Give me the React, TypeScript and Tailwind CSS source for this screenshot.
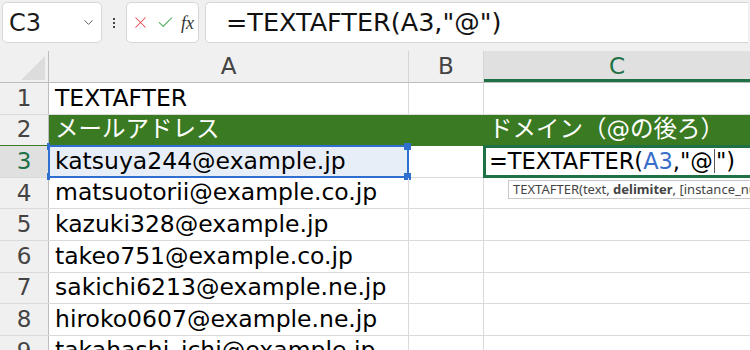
import { X, Check, ChevronDown } from 'lucide-react'

const font = { fontFamily: '"DejaVu Sans", "Noto Sans CJK JP", sans-serif' }

type Row = { n: number; a: string; c?: string; kind?: 'title' | 'header' | 'active' }

const rows: Row[] = [
  { n: 1, a: 'TEXTAFTER', kind: 'title' },
  { n: 2, a: 'メールアドレス', c: 'ドメイン（@の後ろ）', kind: 'header' },
  { n: 3, a: 'katsuya244@example.jp', kind: 'active' },
  { n: 4, a: 'matsuotorii@example.co.jp' },
  { n: 5, a: 'kazuki328@example.jp' },
  { n: 6, a: 'takeo751@example.co.jp' },
  { n: 7, a: 'sakichi6213@example.ne.jp' },
  { n: 8, a: 'hiroko0607@example.ne.jp' },
  { n: 9, a: 'takahashi_ichi@example.jp' },
]

function FormulaBar() {
  return (
    <div className="flex h-[51px] items-start gap-[6px] bg-[#f0f0f0] px-[2px] pt-[2px]">
      <div className="flex h-[41px] w-[100px] items-center justify-between rounded-[5px] border border-[#d6d6d6] bg-white pl-[6px] pr-[5px]">
        <span className="text-[24px] leading-none text-[#1a1a1a]">C3</span>
        <ChevronDown size={15} strokeWidth={1.5} className="text-[#555]" />
      </div>
      <div className="flex h-[41px] w-[12px] flex-col items-center justify-center gap-[2px]">
        <span className="h-[2px] w-[2px] bg-[#444]" />
        <span className="h-[2px] w-[2px] bg-[#444]" />
        <span className="h-[2px] w-[2px] bg-[#444]" />
      </div>
      <div className="flex h-[41px] w-[73px] items-center gap-[6px] rounded-[5px] border border-[#d6d6d6] bg-white pl-[4px]">
        <X size={19} strokeWidth={1.3} className="text-[#e5484d]" />
        <Check size={19} strokeWidth={1.3} className="text-[#3aa64a]" />
        <span className="text-[18px] italic leading-none text-[#333]" style={{ fontFamily: '"Liberation Serif", serif' }}>
          fx
        </span>
      </div>
      <div className="flex h-[41px] flex-1 items-center rounded-l-[5px] border border-r-0 border-[#d6d6d6] bg-white pl-[20px]">
        <span className="text-[25.5px] leading-none text-[#111]">=TEXTAFTER(A3,"@")</span>
      </div>
    </div>
  )
}

function ColumnHeaders() {
  return (
    <div className="flex h-[32px] border-b border-[#bdbdbd] bg-[#f0f0f0] text-[23px] leading-none text-[#444]">
      <div className="relative w-[49px] shrink-0 border-r border-[#bdbdbd]">
        <svg className="absolute bottom-[2px] right-[3px]" width="24" height="24" viewBox="0 0 24 24">
          <polygon points="24,0 24,24 0,24" fill="#dcdcdc" />
        </svg>
      </div>
      <div className="flex w-[360px] shrink-0 items-center justify-center border-r border-[#d4d4d4]">A</div>
      <div className="flex w-[75px] shrink-0 items-center justify-center border-r border-[#d4d4d4]">B</div>
      <div className="flex flex-1 items-center justify-center border-b-[3px] border-[#1e7145] bg-[#e0e0e0] pt-[3px] text-[#1e7145]">
        C
      </div>
    </div>
  )
}

function GridRow({ row }: { row: Row }) {
  const isHeader = row.kind === 'header'
  const isActive = row.kind === 'active'
  const cellBorder = isHeader ? 'border-[#3a7a22]' : 'border-[#dadada]'
  return (
    <div className={`flex h-[31.6px] shrink-0 border-b ${isHeader ? 'border-[#3a7a22]' : 'border-[#dadada]'}`}>
      <div
        className={`flex w-[49px] shrink-0 items-center justify-center border-r border-[#bdbdbd] text-[23px] leading-none ${
          isActive ? 'bg-[#e0e0e0] text-[#1e7145]' : 'bg-[#f0f0f0] text-[#444]'
        }`}
      >
        {row.n}
      </div>
      <div
        className={`relative flex w-[360px] shrink-0 items-center border-r pl-[6px] text-[23.5px] leading-none ${cellBorder} ${
          isHeader ? 'bg-[#3a7a22] text-white' : isActive ? 'bg-[#e8eef8] text-black' : 'text-black'
        }`}
      >
        <span className="whitespace-nowrap">{row.a}</span>
        {isActive && (
          <div className="pointer-events-none absolute -bottom-[1px] -left-[1px] -right-[1px] -top-[1px] border-[2px] border-[#2f6fd0]">
            <span className="absolute -right-[4px] -top-[4px] h-[7px] w-[7px] bg-[#2f6fd0]" />
            <span className="absolute -bottom-[4px] -right-[4px] h-[7px] w-[7px] bg-[#2f6fd0]" />
            <span className="absolute -left-[3px] -top-[4px] h-[7px] w-[3px] bg-[#2f6fd0]" />
            <span className="absolute -bottom-[4px] -left-[3px] h-[7px] w-[3px] bg-[#2f6fd0]" />
          </div>
        )}
      </div>
      <div className={`w-[75px] shrink-0 border-r ${cellBorder} ${isHeader ? 'bg-[#3a7a22]' : ''}`} />
      <div
        className={`relative flex flex-1 items-center pl-[5px] text-[23.5px] leading-none ${
          isHeader ? 'bg-[#3a7a22] text-white' : 'text-black'
        }`}
      >
        {row.c && <span className="whitespace-nowrap">{row.c}</span>}
        {isActive && (
          <>
            <div className="absolute -bottom-[1px] -left-[1px] -right-[3px] -top-[1px] flex items-center border-[3px] border-[#1e7145] bg-white pl-[3px] text-[22.5px]">
              <span className="whitespace-nowrap">
                =TEXTAFTER(<span className="text-[#3a6fc9]">A3</span>,"@
              </span>
              <span className="mx-[1px] h-[24px] w-[1px] bg-[#555]" />
              <span className="whitespace-nowrap">")</span>
            </div>
            <div className="absolute left-[24px] top-[34px] z-10 whitespace-nowrap border border-[#c8c8c8] bg-white px-[4px] py-[1px] text-[13px] leading-[15px] text-[#444]" style={{ fontFamily: '"Noto Sans", sans-serif' }}>
              TEXTAFTER(text, <b className="font-bold">delimiter</b>, [instance_num], [match_mode], [match_end])
            </div>
          </>
        )}
      </div>
    </div>
  )
}

export default function App() {
  return (
    <div className="h-[350px] w-[750px] overflow-hidden bg-white" style={font}>
      <FormulaBar />
      <ColumnHeaders />
      <div className="flex flex-col">
        {rows.map((r) => (
          <GridRow key={r.n} row={r} />
        ))}
      </div>
    </div>
  )
}
